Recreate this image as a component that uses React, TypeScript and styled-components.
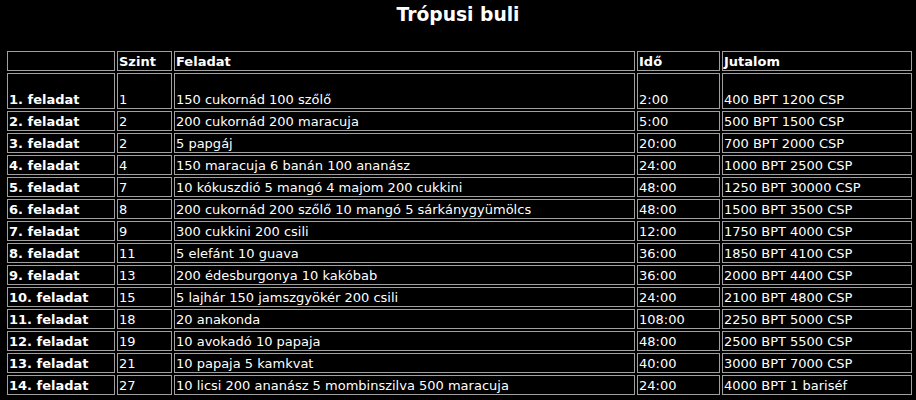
import React from 'react';
import styled, { createGlobalStyle } from 'styled-components';

type Task = {
  level: number;
  task: string;
  time: string;
  reward: string;
};

const tasks: Task[] = [
  { level: 1, task: '150 cukornád 100 szőlő', time: '2:00', reward: '400 BPT 1200 CSP' },
  { level: 2, task: '200 cukornád 200 maracuja', time: '5:00', reward: '500 BPT 1500 CSP' },
  { level: 2, task: '5 papgáj', time: '20:00', reward: '700 BPT 2000 CSP' },
  { level: 4, task: '150 maracuja 6 banán 100 ananász', time: '24:00', reward: '1000 BPT 2500 CSP' },
  { level: 7, task: '10 kókuszdió 5 mangó 4 majom 200 cukkini', time: '48:00', reward: '1250 BPT 30000 CSP' },
  { level: 8, task: '200 cukornád 200 szőlő 10 mangó 5 sárkánygyümölcs', time: '48:00', reward: '1500 BPT 3500 CSP' },
  { level: 9, task: '300 cukkini 200 csili', time: '12:00', reward: '1750 BPT 4000 CSP' },
  { level: 11, task: '5 elefánt 10 guava', time: '36:00', reward: '1850 BPT 4100 CSP' },
  { level: 13, task: '200 édesburgonya 10 kakóbab', time: '36:00', reward: '2000 BPT 4400 CSP' },
  { level: 15, task: '5 lajhár 150 jamszgyökér 200 csili', time: '24:00', reward: '2100 BPT 4800 CSP' },
  { level: 18, task: '20 anakonda', time: '108:00', reward: '2250 BPT 5000 CSP' },
  { level: 19, task: '10 avokadó 10 papaja', time: '48:00', reward: '2500 BPT 5500 CSP' },
  { level: 21, task: '10 papaja 5 kamkvat', time: '40:00', reward: '3000 BPT 7000 CSP' },
  { level: 27, task: '10 licsi 200 ananász 5 mombinszilva 500 maracuja', time: '24:00', reward: '4000 BPT 1 bariséf' },
];

const GlobalStyle = createGlobalStyle`
  html, body {
    margin: 0;
    padding: 0;
    background: #000;
    color: #fff;
    font-family: Verdana, "DejaVu Sans", sans-serif;
  }
`;

const App: React.FC = () => {
  return (
    <Page>
      <GlobalStyle />
      <Title>Trópusi buli</Title>
      <Table>
        <colgroup>
          <col style={{ width: 108 }} />
          <col style={{ width: 55 }} />
          <col style={{ width: 461 }} />
          <col style={{ width: 83 }} />
          <col style={{ width: 190 }} />
        </colgroup>
        <thead>
          <tr>
            <HeadCell></HeadCell>
            <HeadCell>Szint</HeadCell>
            <HeadCell>Feladat</HeadCell>
            <HeadCell>Idő</HeadCell>
            <HeadCell>Jutalom</HeadCell>
          </tr>
        </thead>
        <tbody>
          {tasks.map((t, i) => (
            <Row key={i} tall={i === 0}>
              <HeadCell>{i + 1}. feladat</HeadCell>
              <Cell>{t.level}</Cell>
              <Cell>{t.task}</Cell>
              <Cell>{t.time}</Cell>
              <Cell>{t.reward}</Cell>
            </Row>
          ))}
        </tbody>
      </Table>
    </Page>
  );
};

const Page = styled.div`
  width: 916px;
  height: 400px;
  padding-top: 4px;
  box-sizing: border-box;
  background: #000;
`;

const Title = styled.div`
  height: 22px;
  line-height: 22px;
  text-align: center;
  font-size: 18.72px;
  font-weight: bold;
  color: #fff;
  margin-bottom: 23px;
`;

const Table = styled.table`
  margin-left: 5px;
  width: 909px;
  table-layout: fixed;
  border-collapse: separate;
  border-spacing: 2px;
  font-size: 13px;
  line-height: 16px;
  color: #fff;
`;

const Row = styled.tr<{ tall?: boolean }>`
  height: ${({ tall }) => (tall ? '36px' : '20px')};
`;

const Cell = styled.td`
  border: 1px solid #a0a0a0;
  padding: 1px 1px 0;
  text-align: left;
  vertical-align: bottom;
  white-space: nowrap;
  overflow: hidden;
  box-sizing: border-box;
`;

const HeadCell = styled.th`
  border: 1px solid #a0a0a0;
  padding: 1px 1px 0;
  height: 20px;
  text-align: left;
  vertical-align: bottom;
  font-weight: bold;
  white-space: nowrap;
  overflow: hidden;
  box-sizing: border-box;
`;

export default App;
